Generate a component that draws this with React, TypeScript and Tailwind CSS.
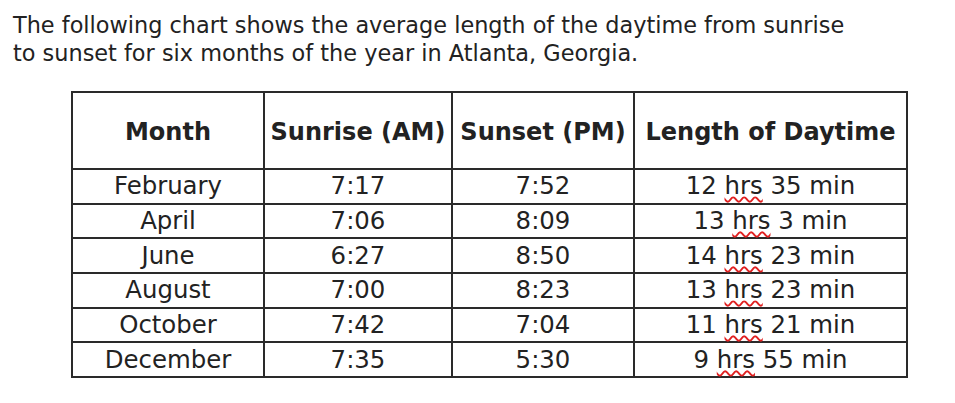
import React from "react";

const rows = [
  ["February", "7:17", "7:52", "12", "35"],
  ["April", "7:06", "8:09", "13", "3"],
  ["June", "6:27", "8:50", "14", "23"],
  ["August", "7:00", "8:23", "13", "23"],
  ["October", "7:42", "7:04", "11", "21"],
  ["December", "7:35", "5:30", "9", "55"],
];

export default function App() {
  return (
    <div
      className="w-[955px] h-[403px] bg-white text-[#222] overflow-hidden"
      style={{ fontFamily: "'DejaVu Sans', Verdana, sans-serif" }}
    >
      <p className="pl-[13px] pt-[11px] text-[22.4px] leading-[28px]">
        The following chart shows the average length of the daytime from sunrise
        <br />
        to sunset for six months of the year in Atlanta, Georgia.
      </p>
      <table className="ml-[71px] mt-[24px] border-collapse table-fixed w-[835px] text-[24.4px]">
        <colgroup>
          <col className="w-[192px]" />
          <col className="w-[188px]" />
          <col className="w-[182px]" />
          <col className="w-[273px]" />
        </colgroup>
        <thead>
          <tr className="h-[77px]">
            {["Month", "Sunrise (AM)", "Sunset (PM)", "Length of Daytime"].map((h) => (
              <th
                key={h}
                className="border-2 border-[#2a2a2a] font-bold text-center whitespace-nowrap p-0 pt-[2px] text-[24px]"
              >
                {h}
              </th>
            ))}
          </tr>
        </thead>
        <tbody>
          {rows.map(([m, a, b, h, mi]) => (
            <tr key={m} className="h-[34.7px]">
              <td className="border-2 border-[#2a2a2a] text-center p-0 leading-[30px]">{m}</td>
              <td className="border-2 border-[#2a2a2a] text-center p-0 leading-[30px]">{a}</td>
              <td className="border-2 border-[#2a2a2a] text-center p-0 leading-[30px]">{b}</td>
              <td className="border-2 border-[#2a2a2a] text-center p-0 leading-[30px] whitespace-nowrap">
                {h}{" "}
                <span className="underline decoration-wavy decoration-[#e02020] decoration-[1.5px] underline-offset-[2px]">
                  hrs
                </span>{" "}
                {mi} min
              </td>
            </tr>
          ))}
        </tbody>
      </table>
    </div>
  );
}
